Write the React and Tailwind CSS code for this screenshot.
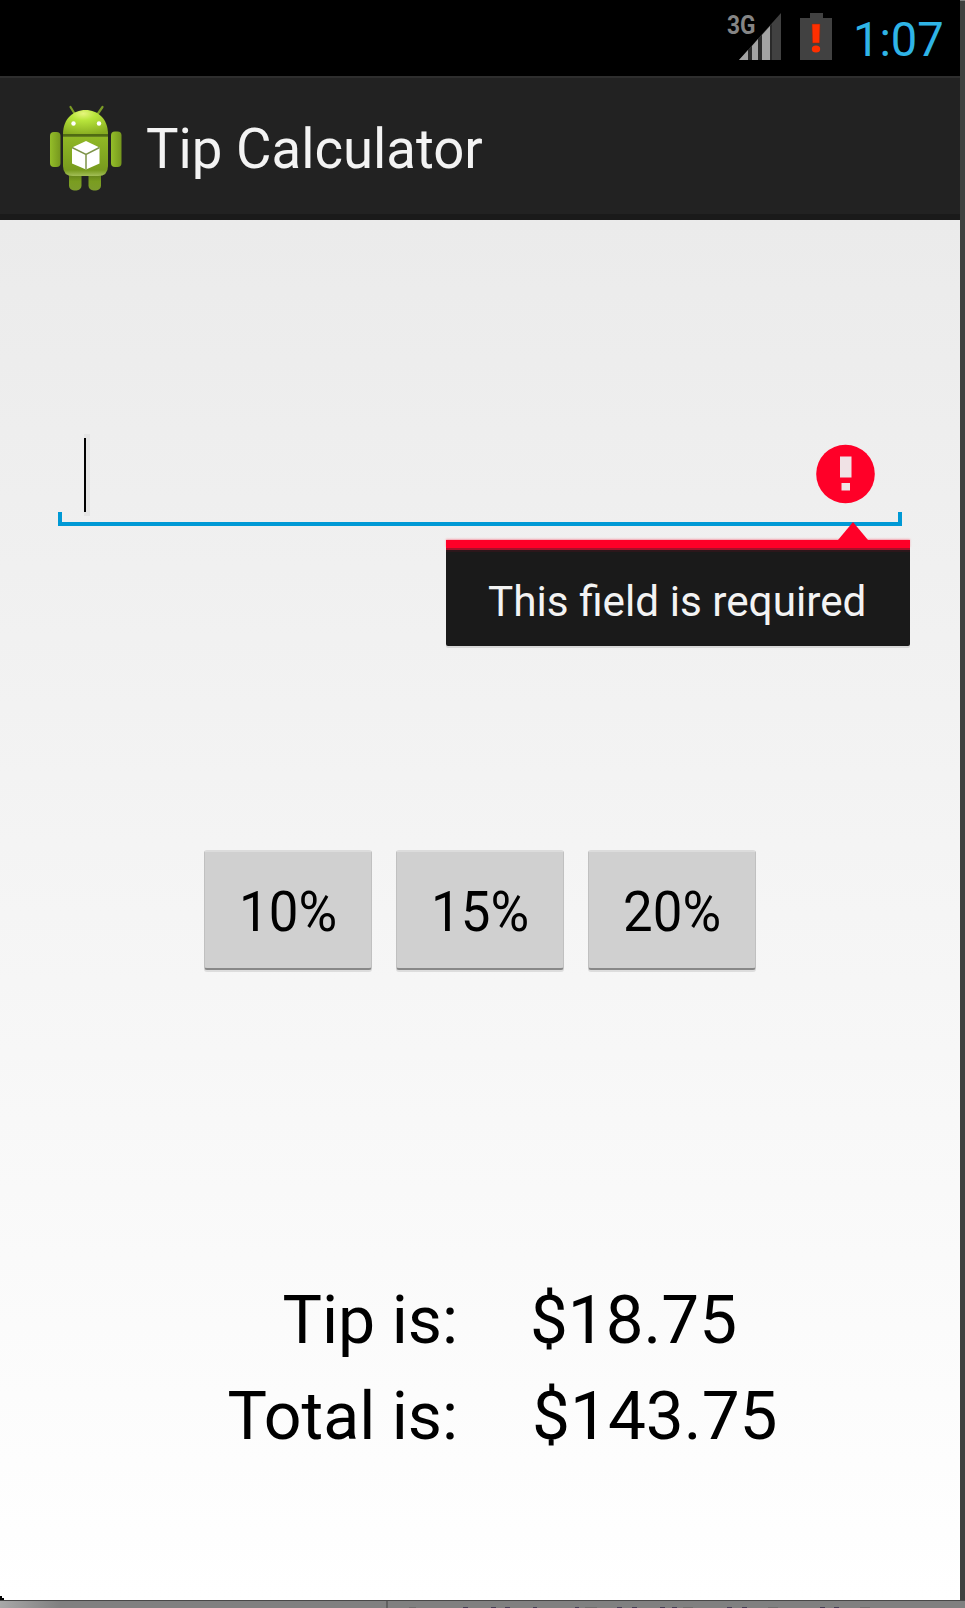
const FONT = "font-['Roboto','Liberation_Sans',sans-serif]";

function StatusBar() {
  return (
    <div className="flex h-[76px] bg-black pl-[714px]">
      <svg className="mt-[2px] h-[60px] w-[70px] shrink-0" viewBox="714 2 70 60">
        <text x="727" y="33.500" fontSize="26" fontWeight="700" fill="#858585" textLength="28.500" lengthAdjust="spacingAndGlyphs" fontFamily="Roboto">3G</text>
        <path d="M781 13V60H739Z" fill="#414141" />
        <path d="M739 60L748 50V60ZM752 46L758 39V60H752ZM762 35L770 26V60H762Z" fill="#a3a3a3" />
        <path d="M748 50L752 46V60H748ZM758 39L762 35V60H758ZM770 26L772 24V60H770Z" fill="#2a2a2a" />
      </svg>
      <svg className="ml-[16px] mt-[12px] h-[50px] w-[32px] shrink-0" viewBox="800 12 32 50">
        <path d="M810 13H823V18H832V60H800V18H810Z" fill="#414141" />
        <path d="M812 24H820L819.500 43H812.500Z" fill="#ff2f00" stroke="#8a2a10" strokeOpacity="0.5" />
        <ellipse cx="816" cy="49" rx="4.200" ry="3.600" fill="#ff2f00" />
      </svg>
      <div className="ml-[21px] mt-[12px] origin-left scale-x-[0.98] text-[48px] leading-[56px] text-[#2fb4e6]">1:07</div>
    </div>
  );
}

function Robot() {
  return (
    <svg className="h-[90px] w-[76px] shrink-0" viewBox="48 103 76 90">
      <defs>
        <radialGradient id="head" cx="0.45" cy="0.15" r="0.9">
          <stop offset="0" stopColor="#e6f57e" />
          <stop offset="0.3" stopColor="#b9e63c" />
          <stop offset="1" stopColor="#86ab20" />
        </radialGradient>
        <linearGradient id="body" x1="0" y1="0" x2="0" y2="1">
          <stop offset="0" stopColor="#90b825" />
          <stop offset="0.85" stopColor="#789b1e" />
          <stop offset="1" stopColor="#a3bf58" />
        </linearGradient>
        <linearGradient id="limb" x1="0" y1="0" x2="1" y2="0">
          <stop offset="0" stopColor="#94be29" />
          <stop offset="1" stopColor="#76971e" />
        </linearGradient>
        <linearGradient id="leg" x1="0" y1="0" x2="0" y2="1">
          <stop offset="0" stopColor="#4f6a14" />
          <stop offset="0.6" stopColor="#7a9d20" />
          <stop offset="1" stopColor="#7c9b2c" />
        </linearGradient>
      </defs>
      <path d="M70.500 107L74.500 113.500M102.500 107L98 113.500" stroke="#7b9b26" strokeWidth="2.200" strokeLinecap="round" />
      <rect x="69" y="168" width="12.500" height="22.500" rx="5" fill="url(#leg)" />
      <rect x="88.500" y="168" width="12.500" height="22.500" rx="5" fill="url(#leg)" />
      <rect x="50" y="132" width="10.500" height="35" rx="4" fill="url(#limb)" />
      <rect x="111" y="131.500" width="10.500" height="35.500" rx="4" fill="url(#limb)" />
      <path d="M63 134C63 119 73 110 85.500 110S108 119 108 134Z" fill="url(#head)" />
      <path d="M63 134H108V136.500H63Z" fill="#4f6b12" />
      <path d="M63 136.500H108V166Q108 176 98 176H73Q63 176 63 166Z" fill="url(#body)" />
      <circle cx="73.500" cy="123.500" r="2.200" fill="#fff" />
      <circle cx="99" cy="123.500" r="2.200" fill="#fff" />
      <path d="M86 141L99.500 147.500V163.500L86 169.500L72 163.500V147.500Z" fill="#fff" />
      <path d="M72 147.500L86 154.500L99.500 147.500M86 154.500V169.500" fill="none" stroke="#7d9448" strokeWidth="1.500" />
    </svg>
  );
}

function ActionBar() {
  return (
    <div className="flex h-[144px] border-b-[6px] border-t-2 border-b-[#1a1a1a] border-t-[#2e2e2e] bg-[#222222] pl-[48px] pt-[25px]">
      <Robot />
      <div className="ml-[22px] mt-[14px] origin-left scale-x-[0.974] whitespace-nowrap text-[56px] leading-[64px] text-[#f3f3f3]">Tip Calculator</div>
    </div>
  );
}

function AmountField() {
  return (
    <div className="relative ml-[58px] mt-[214px] h-[92px] w-[844px]">
      <div className="flex h-full items-start justify-between pl-[26px] pr-[26px]">
        <div className="h-[82px] w-[6px] bg-[#e5e5e5] py-[4px]">
          <div className="h-full w-[2px] bg-black" />
        </div>
        <svg className="mt-[9px] h-[61px] w-[61px]" viewBox="0 0 61 61">
          <circle cx="30.500" cy="31" r="29.300" fill="#ff0028" />
          <path d="M25 13.500H36.500V34.500H25ZM26.500 40H35V47.500H26.500Z" fill="#f0e2e5" />
        </svg>
      </div>
      <div className="absolute bottom-0 left-0 h-[14px] w-full border-x-4 border-b-4 border-[#0099d5]" />
      <div className="absolute left-[388px] top-[88px] z-10 w-[464px]">
        <svg className="ml-[391px] block h-[18px] w-[32px]" viewBox="0 0 32 18">
          <path d="M16 0L31 18H1Z" fill="#ff0028" />
        </svg>
        <div className="h-[8px] bg-[#ff0028] shadow-[0_-1px_2px_#ff002855]" />
        <div className="relative h-[98px] rounded-b-[2px] border-t-2 border-[#a5112a] bg-[#1a1a1a] shadow-[0_2px_0_#d8d8d8]">
          <div className="h-[2px] bg-[#2c171b]" />
          <div className="ml-[42px] mt-[25px] w-max origin-left scale-x-[1.007] whitespace-nowrap text-[42px] leading-[50px] text-[#f3f3f3]">This field is required</div>
        </div>
      </div>
    </div>
  );
}

function TipButton({ label }) {
  return (
    <button className="h-[120px] w-[168px] rounded-[3px] border-x border-b-2 border-t-2 border-x-[#c0c0c0] border-b-[#888888] border-t-[#dcdcdc] bg-[#d0d0d0] pt-[3px] text-black shadow-[0_2px_0_#dddddd]">
      <span className="inline-block scale-x-[0.96] text-[55px] leading-[60px]">{label}</span>
    </button>
  );
}

const SPECKS = [
  [463, 5], [491, 5], [505, 5], [533, 4], [575, 4], [617, 5], [632, 5], [660, 5],
  [672, 5], [727, 5], [742, 5], [820, 5], [834, 5],
];
const DASHES = [[409, 7], [585, 12], [683, 10], [768, 10], [860, 10]];

export default function App() {
  return (
    <div className={"flex h-[1608px] w-[965px] flex-col overflow-hidden bg-[#808080] " + FONT}>
      <div className="flex h-[1600px] bg-[#404040]">
        <div className="relative flex h-[1600px] w-[960px] shrink-0 flex-col">
          <StatusBar />
          <ActionBar />
          <main className="h-[1380px] bg-linear-to-b from-[#ebebeb] to-white">
            <AmountField />
            <div className="ml-[204px] mt-[324px] flex gap-[24px]">
              <TipButton label="10%" />
              <TipButton label="15%" />
              <TipButton label="20%" />
            </div>
            <div className="mt-[310px] grid grid-cols-[458px_1fr] gap-x-[72px] whitespace-nowrap text-[67px] leading-[80px] text-black">
              <div className="h-[95.500px] origin-right scale-x-[0.988] text-right">Tip is:</div>
              <div className="w-max origin-left scale-x-[1.005]">$18.75</div>
              <div className="origin-right scale-x-[0.988] text-right">Total is:</div>
              <div className="ml-[2px] w-max origin-left scale-x-[1.008]">$143.75</div>
            </div>
          </main>
          <svg className="absolute bottom-0 left-0 h-[4px] w-[4px]" viewBox="0 0 4 4">
            <path d="M0 0H2V2H4V4H0Z" fill="#000" />
          </svg>
        </div>
        <div className="h-[1px] w-[5px] bg-[#808080]" />
      </div>
      <div className="relative flex h-[8px] border-t border-[#484848] bg-[#808080]">
        <div className="h-full w-[388px] border-r-2 border-[#606060] bg-linear-to-r from-[#a8a8a8] to-[#808080] to-[60px]" />
        <svg className="h-[7px] w-[577px]" viewBox="388 0 577 7">
          {SPECKS.map(([x, w]) => (
            <rect key={x} x={x} y="6" width={w} height="1" fill="#453f55" />
          ))}
          {DASHES.map(([x, w]) => (
            <rect key={x} x={x} y="6" width={w} height="1" fill="#6e6e6e" />
          ))}
        </svg>
      </div>
    </div>
  );
}
